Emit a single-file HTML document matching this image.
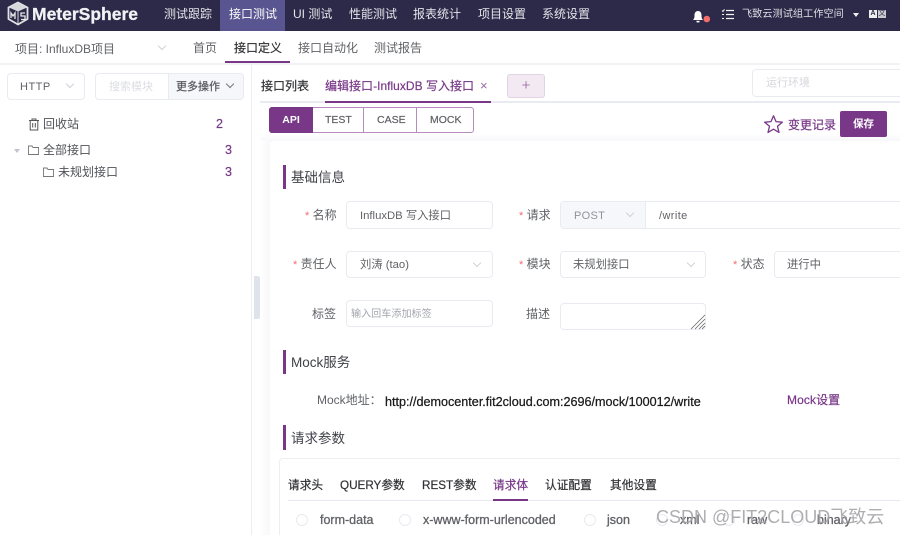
<!DOCTYPE html>
<html><head><meta charset="utf-8">
<style>
*{box-sizing:border-box}
html,body{margin:0;padding:0;width:900px;height:535px;overflow:hidden;background:#fff}
#w{position:absolute;left:0;top:0;width:900px;height:535px;overflow:hidden;background:#fff;font-family:"Liberation Sans","Noto Sans CJK SC",sans-serif;color:#606266;font-size:12px;filter:blur(.35px)}
.a{position:absolute}
.t{position:absolute;white-space:nowrap;line-height:20px;height:20px}
.m{-webkit-text-stroke:.2px currentColor}
.b{position:absolute;border:1px solid #e9ebf0;border-radius:4px;background:#fff}
.v{position:absolute;width:6px;height:6px;border-right:1px solid #cfd2d8;border-bottom:1px solid #cfd2d8;transform:rotate(45deg)}
.p{color:#783887}
.h{position:absolute;left:283px;width:3px;height:24px;background:#783887}
.s{color:#f56c6c;font-size:11px}
.r{position:absolute;width:12px;height:12px;border:1px solid #e8eaef;border-radius:50%;background:#fff}
.o{font-size:12.500px;color:#606266;-webkit-text-stroke:.3px currentColor}
.q{font-size:11.700px;color:#303133;-webkit-text-stroke:.2px currentColor}
.f{font-size:11.300px}
</style></head><body><div id="w">

<!-- top bar -->
<div class="a" style="left:0;top:0;width:900px;height:31px;background:#2c2a48"></div>
<div class="a" style="left:220px;top:0;width:65px;height:31px;background:#585590"></div>
<svg class="a" style="left:6px;top:1px" width="24" height="25" viewBox="0 0 24 25">
<path d="M12 1.500 L21.500 6.500 V18 L12 23.500 L2.500 18 V6.500Z" fill="#2c2a48" stroke="#e2e2e6" stroke-width="1.800"/>
<path d="M3 6.500 L12 2 L21 6.500 L12 10.500Z" fill="#d8d8dc"/>
<path d="M12 10.500 V23" stroke="#d8d8dc" stroke-width="1"/>
<path d="M5 17 V12 L7 15 L9 12 V18" fill="none" stroke="#e8e8ea" stroke-width="1.300"/>
<path d="M19 12 H15 V15 H19 V18.500 H15" fill="none" stroke="#e8e8ea" stroke-width="1.300"/>
</svg>
<div class="t" style="left:32px;top:4px;font-size:17.500px;font-weight:bold;color:#f2f2f4;-webkit-text-stroke:.3px #f2f2f4">MeterSphere</div>
<div class="t" style="left:164px;top:4px;color:#e4e4ea">测试跟踪</div>
<div class="t" style="left:229px;top:4px;color:#fff">接口测试</div>
<div class="t" style="left:293px;top:4px;color:#e4e4ea">UI 测试</div>
<div class="t" style="left:349px;top:4px;color:#e4e4ea">性能测试</div>
<div class="t" style="left:413px;top:4px;color:#e4e4ea">报表统计</div>
<div class="t" style="left:478px;top:4px;color:#e4e4ea">项目设置</div>
<div class="t" style="left:542px;top:4px;color:#e4e4ea">系统设置</div>
<svg class="a" style="left:691px;top:9px" width="22" height="16" viewBox="0 0 22 16">
<path d="M2 11 C3.500 9.500 3.500 8 3.500 6 C3.500 3.500 5 2 7 2 C9 2 10.500 3.500 10.500 6 C10.500 8 10.500 9.500 12 11 Z" fill="#fff"/>
<rect x="5.500" y="11.800" width="3" height="1.600" fill="#fff"/>
<circle cx="15.800" cy="10" r="3.300" fill="#f56c6c"/>
</svg>
<svg class="a" style="left:721px;top:8px" width="14" height="13" viewBox="0 0 14 13">
<path d="M5 2.500 H13 M5 6.500 H13 M5 10.500 H13" stroke="#f2f2f2" stroke-width="1.200"/>
<path d="M1 2.500 L2 3.500 L3.500 1.300 M1 6.500 H3 M1 10.500 H3" stroke="#f2f2f2" stroke-width="1" fill="none"/>
</svg>
<div class="t" style="left:742px;top:5px;font-size:10.200px;color:#dfdfe6">飞致云测试组工作空间</div>
<div class="a" style="left:853px;top:13px;border-left:3.500px solid transparent;border-right:3.500px solid transparent;border-top:4px solid #f0f0f0"></div>
<div class="a" style="left:869px;top:10px;width:8px;height:8px;background:#eee;color:#2c2a48;font-size:7px;line-height:8px;text-align:center;font-weight:bold">A</div>
<div class="a" style="left:878px;top:10px;width:8px;height:8px;background:#c9c9d0;color:#2c2a48;font-size:7px;line-height:8px;text-align:center">文</div>

<!-- sub nav -->
<div class="a" style="left:0;top:63px;width:900px;height:2px;background:#f1f2f5"></div>
<div class="t" style="left:15px;top:39px;font-size:12px;color:#606266">项目: InfluxDB项目</div>
<div class="v" style="left:159px;top:43px"></div>
<div class="t" style="left:193px;top:38px;color:#606266">首页</div>
<div class="t m" style="left:234px;top:38px;color:#303133">接口定义</div>
<div class="a" style="left:225px;top:61px;width:65px;height:2px;background:#783887"></div>
<div class="t" style="left:298px;top:38px;color:#606266">接口自动化</div>
<div class="t" style="left:374px;top:38px;color:#606266">测试报告</div>

<!-- sidebar -->
<div class="a" style="left:251px;top:65px;width:1px;height:470px;background:#eceef2"></div>
<div class="a" style="left:254px;top:276px;width:7px;height:43px;background:#dfe3ea;border-radius:0 4px 4px 0"></div>
<div class="b" style="left:7px;top:73px;width:78px;height:27px"></div>
<div class="t" style="left:20px;top:77px;font-size:11px;letter-spacing:.5px;color:#606266">HTTP</div>
<div class="v" style="left:67px;top:81px"></div>
<div class="b" style="left:95px;top:73px;width:149px;height:27px"></div>
<div class="a" style="left:168px;top:74px;width:75px;height:25px;background:#f5f7fa;border-left:1px solid #e9ebf0;border-radius:0 4px 4px 0"></div>
<div class="t" style="left:109px;top:77px;font-size:11px;color:#dcdde3">搜索模块</div>
<div class="t m" style="left:176px;top:77px;font-size:11px;color:#55565c">更多操作</div>
<div class="v" style="left:227px;top:81px;border-color:#777"></div>
<svg class="a" style="left:28px;top:118px" width="12" height="13" viewBox="0 0 12 13">
<path d="M1 2.500 H11 M4 2.500 V1 H8 V2.500 M2.200 2.500 V12 H9.800 V2.500 M4.700 5 V9.500 M7.300 5 V9.500" fill="none" stroke="#555" stroke-width="1"/>
</svg>
<div class="t" style="left:43px;top:114px;color:#505258">回收站</div>
<div class="t p m" style="left:216px;top:114px;font-size:12.500px">2</div>
<div class="a" style="left:14px;top:149px;border-left:3.500px solid transparent;border-right:3.500px solid transparent;border-top:4.500px solid #c0c4cc"></div>
<svg class="a" style="left:27px;top:144px" width="13" height="12" viewBox="0 0 13 12"><path d="M1.500 2 H5 L6 3.500 H11.500 V10.500 H1.500Z" fill="none" stroke="#777" stroke-width=".9"/></svg>
<div class="t" style="left:43px;top:140px;color:#505258">全部接口</div>
<div class="t p m" style="left:225px;top:140px;font-size:12.500px">3</div>
<svg class="a" style="left:42px;top:166px" width="13" height="12" viewBox="0 0 13 12"><path d="M1.500 2 H5 L6 3.500 H11.500 V10.500 H1.500Z" fill="none" stroke="#777" stroke-width=".9"/></svg>
<div class="t" style="left:58px;top:162px;color:#505258">未规划接口</div>
<div class="t p m" style="left:225px;top:162px;font-size:12.500px">3</div>

<!-- card -->
<div class="a" style="left:260px;top:134px;width:640px;height:8px;background:linear-gradient(#fff,#f7f7f9)"></div>
<div class="a" style="left:260px;top:140px;width:10px;height:395px;background:linear-gradient(90deg,#fff,#f8f8fa)"></div>
<div class="a" style="left:270px;top:141px;width:630px;height:394px;background:#fff;border-radius:4px 0 0 0"></div>

<!-- tabs -->
<div class="a" style="left:260px;top:101px;width:640px;height:2px;background:#e9ebf3"></div>
<div class="t m" style="left:261px;top:76px;color:#303133">接口列表</div>
<div class="t p m" style="left:325px;top:76px;letter-spacing:.02px">编辑接口-InfluxDB 写入接口</div>
<div class="t" style="left:480px;top:76px;font-size:13px;color:#9a6aa5">×</div>
<div class="a" style="left:325px;top:101px;width:166px;height:2px;background:#783887"></div>
<div class="a" style="left:507px;top:74px;width:38px;height:24px;background:#f2e9f3;border:1px solid #e0d4e4;border-radius:3px;color:#a77fb0;text-align:center;line-height:21px;font-size:15px">+</div>
<div class="b" style="left:752px;top:69px;width:160px;height:28px"></div>
<div class="t" style="left:766px;top:73px;font-size:11px;color:#d5d6dc">运行环境</div>

<!-- API tabs -->
<div class="a" style="left:269px;top:107px;width:205px;height:26px;border:1px solid #b58cbc;border-radius:3px"></div>
<div class="a" style="left:269px;top:107px;width:44px;height:26px;background:#783887;border-radius:3px 0 0 3px;color:#fff;font-size:10.500px;font-weight:bold;text-align:center;line-height:27px">API</div>
<div class="a" style="left:363px;top:107px;width:1px;height:26px;background:#b58cbc"></div>
<div class="a" style="left:416px;top:107px;width:1px;height:26px;background:#b58cbc"></div>
<div class="t m" style="left:325px;top:110px;font-size:10.500px;color:#606266">TEST</div>
<div class="t m" style="left:377px;top:110px;font-size:10.500px;color:#606266">CASE</div>
<div class="t m" style="left:430px;top:110px;font-size:10.500px;color:#606266">MOCK</div>

<svg class="a" style="left:763px;top:114px" width="21" height="20" viewBox="0 0 21 20"><path d="M10.500 1.800 L13 7.600 L19.300 8.200 L14.500 12.300 L16 18.400 L10.500 15.200 L5 18.400 L6.500 12.300 L1.700 8.200 L8 7.600Z" fill="none" stroke="#783887" stroke-width="1.300" stroke-linejoin="round"/></svg>
<div class="t p m" style="left:788px;top:115px">变更记录</div>
<div class="a" style="left:840px;top:111px;width:47px;height:26px;background:#783887;border-radius:2px;color:#fff;font-size:10.500px;font-weight:bold;text-align:center;line-height:26px">保存</div>

<!-- basic -->
<div class="h" style="top:165px"></div>
<div class="t" style="left:291px;top:168px;font-size:13.500px;color:#404248">基础信息</div>

<div class="t" style="left:305px;top:205px"><span class="s">*</span> <span>名称</span></div>
<div class="b" style="left:346px;top:201px;width:147px;height:28px"></div>
<div class="t f" style="left:360px;top:206px">InfluxDB 写入接口</div>
<div class="t" style="left:519px;top:205px"><span class="s">*</span> <span>请求</span></div>
<div class="b" style="left:560px;top:201px;width:345px;height:28px"></div>
<div class="a" style="left:561px;top:202px;width:85px;height:26px;background:#f5f7fa;border-right:1px solid #e9ebf0;border-radius:4px 0 0 4px"></div>
<div class="t" style="left:574px;top:206px;font-size:11px;letter-spacing:.3px;color:#909399">POST</div>
<div class="v" style="left:627px;top:210px"></div>
<div class="t" style="left:659px;top:206px;font-size:11px;letter-spacing:.4px">/write</div>

<div class="t" style="left:293px;top:254px"><span class="s">*</span> <span>责任人</span></div>
<div class="b" style="left:346px;top:251px;width:147px;height:27px"></div>
<div class="t f" style="left:360px;top:255px">刘涛 (tao)</div>
<div class="v" style="left:474px;top:260px"></div>
<div class="t" style="left:519px;top:254px"><span class="s">*</span> <span>模块</span></div>
<div class="b" style="left:560px;top:251px;width:146px;height:27px"></div>
<div class="t f" style="left:573px;top:255px">未规划接口</div>
<div class="v" style="left:688px;top:260px"></div>
<div class="t" style="left:733px;top:254px"><span class="s">*</span> <span>状态</span></div>
<div class="b" style="left:774px;top:251px;width:140px;height:27px"></div>
<div class="t f" style="left:787px;top:255px">进行中</div>

<div class="t" style="left:312px;top:304px">标签</div>
<div class="b" style="left:346px;top:300px;width:147px;height:27px"></div>
<div class="t" style="left:351px;top:305px;font-size:10.100px;color:#a3a6ad">输入回车添加标签</div>
<div class="t" style="left:526px;top:304px">描述</div>
<div class="b" style="left:560px;top:303px;width:146px;height:27px"></div>
<svg class="a" style="left:690px;top:314px" width="16" height="16" viewBox="0 0 16 16"><path d="M1 15 L15 1 M5 15 L15 5 M9 15 L15 9 M12 15 L15 12" stroke="#666" stroke-width=".8"/></svg>

<!-- mock -->
<div class="h" style="top:350px"></div>
<div class="t" style="left:291px;top:353px;font-size:13.500px;color:#404248">Mock服务</div>
<div class="t" style="left:317px;top:390px;color:#606266">Mock地址：</div>
<div class="t" style="left:385px;top:392px;font-size:12.600px;color:#1a1a1a;-webkit-text-stroke:.25px #1a1a1a">http://democenter.fit2cloud.com:2696/mock/100012/write</div>
<div class="t p m" style="left:787px;top:390px;letter-spacing:.1px">Mock设置</div>

<!-- params -->
<div class="h" style="top:425px;height:25px"></div>
<div class="t" style="left:291px;top:429px;font-size:13.500px;color:#404248">请求参数</div>
<div class="a" style="left:279px;top:458px;width:640px;height:90px;border:1px solid #eceef2;border-radius:4px"></div>
<div class="a" style="left:288px;top:500px;width:612px;height:1px;background:#e6e9f2"></div>
<div class="a" style="left:493px;top:499px;width:35px;height:2px;background:#783887"></div>
<div class="t q" style="left:288px;top:476px">请求头</div>
<div class="t q" style="left:340px;top:476px">QUERY参数</div>
<div class="t q" style="left:422px;top:476px">REST参数</div>
<div class="t p q" style="left:493px;top:476px;color:#783887">请求体</div>
<div class="t q" style="left:545px;top:476px">认证配置</div>
<div class="t q" style="left:610px;top:476px">其他设置</div>

<div class="r" style="left:296px;top:514px"></div>
<div class="t o" style="left:320px;top:510px">form-data</div>
<div class="r" style="left:399px;top:514px"></div>
<div class="t o" style="left:423px;top:510px">x-www-form-urlencoded</div>
<div class="r" style="left:584px;top:514px"></div>
<div class="t o" style="left:607px;top:510px">json</div>
<div class="r" style="left:656px;top:514px"></div>
<div class="t o" style="left:680px;top:510px">xml</div>
<div class="r" style="left:723px;top:514px"></div>
<div class="t o" style="left:747px;top:510px">raw</div>
<div class="r" style="left:792px;top:514px"></div>
<div class="t o" style="left:817px;top:510px">binary</div>

<!-- watermark -->
<div class="t" style="left:656px;top:506px;font-size:18px;line-height:22px;height:22px;color:rgba(120,120,125,.6);text-shadow:0 0 1px rgba(255,255,255,.8)">CSDN @FIT2CLOUD飞致云</div>

</div></body></html>
